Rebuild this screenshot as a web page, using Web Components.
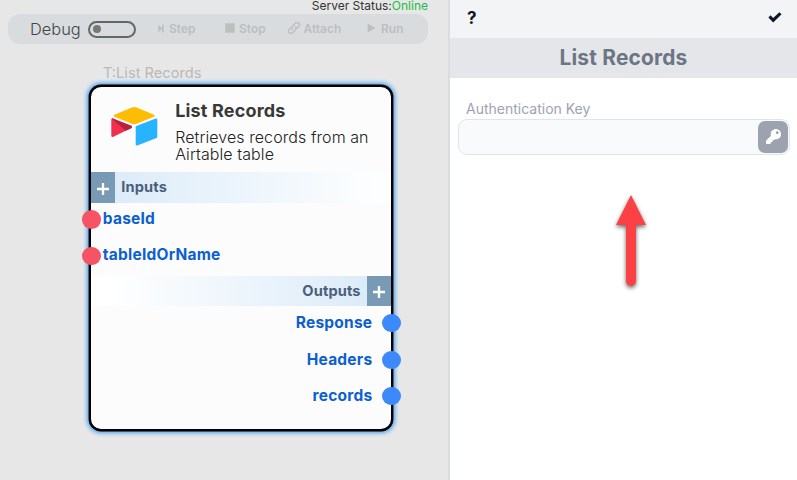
<!DOCTYPE html>
<html lang="en">
<head>
<meta charset="utf-8">
<title>List Records</title>
<style>
html,body{margin:0;height:100%;overflow:hidden}
body{font-family:Inter,"Liberation Sans",sans-serif;background:#fff}
</style>
</head>
<body>
<flow-app></flow-app>
<script>
const define = (name, html, extra) => customElements.define(name, class extends HTMLElement {
  constructor() {
    super();
    const t = document.createElement('template');
    t.innerHTML = html;
    this.attachShadow({mode: 'open'}).append(t.content.cloneNode(true));
    if (extra) extra(this, this.shadowRoot);
  }
});

define('ui-icon', `<style>:host{display:inline-flex}svg{display:block;width:100%;height:100%;fill:currentColor;overflow:visible}</style><svg></svg>`, (el, root) => {
  const icons = {
    step: ['0 0 6 10', '<path d="M0 .5 4.2 5 0 9.5zM4.2.5H6v9H4.2z"/>'],
    stop: ['0 0 10 10', '<path d="M.3.3h9.4v9.4H.3z"/>'],
    run: ['0 0 9 10', '<path d="M.6.4 8.6 5 .6 9.6z"/>'],
    link: ['0 0 24 24', '<path fill="none" stroke="currentColor" stroke-width="2.8" stroke-linecap="round" d="M9.2 14.8a5 5 0 0 1 0-7L14.7 2.6a4.8 4.8 0 0 1 6.8 6.8l-2.8 2.8M14.8 9.2a5 5 0 0 1 0 7L9.3 21.4a4.8 4.8 0 0 1-6.8-6.8l2.8-2.8"/>'],
    check: ['0 0 14 11', '<path d="M.4 5.4 2.5 3.3 5.2 6 11.4.2l2.2 2.1L5.2 10.5z"/>'],
    key: ['0 0 512 512', '<path fill-rule="evenodd" d="M512 176.001C512 273.203 433.202 352 336 352c-11.220 0-22.190-1.062-32.827-3.069l-24.012 27.014A23.999 23.999 0 0 1 261.223 384H224v40c0 13.255-10.745 24-24 24h-40v40c0 13.255-10.745 24-24 24H24c-13.255 0-24-10.745-24-24v-78.059c0-6.365 2.529-12.470 7.029-16.971l161.802-161.802C163.108 213.814 160 195.271 160 176 160 78.798 238.797.001 335.999 0 433.488-.001 512 78.511 512 176.001zM336 128c0 26.510 21.490 48 48 48s48-21.490 48-48-21.490-48-48-48-48 21.490-48 48z"/>'],
    airtable: ['0 0 46 39', '<path fill="#febd00" d="M20.800.500 3.500 7.700c-1 .4-1 1.700 0 2.100l17.400 6.900c1.500.6 3.200.6 4.700 0L43 9.800c1-.4 1-1.700 0-2.100L25.600.5a6.300 6.300 0 0 0-4.800 0z"/><path fill="#27b3ff" d="M24.700 20.200v17.200c0 .8.800 1.400 1.600 1.100l19.300-7.500c.4-.2.700-.6.700-1.100V12.700c0-.8-.8-1.400-1.600-1.100l-19.300 7.500c-.4.200-.7.600-.7 1.100z"/><path fill="#f22f4c" d="m20.500 21-5.700 2.800-12.500 6C1.500 30.200.3 29.600.3 28.700V12.600c0-.3.200-.6.400-.8.900-.5 1.700-.1 2.300.1l17.200 6.900c1 .4 1 1.700.3 2.200z"/><path fill="#b32440" d="m20.500 21-5.700 2.800L.7 11.800c.5-.4 1.400-.3 2.300.1l17.200 6.900c1 .4 1 1.700.3 2.200z"/>'],
    arrow: ['0 0 30 93', '<path d="M15 0 30 30H20v56a5 5 0 0 1-10 0V30H0z"/>']
  };
  const [box, body] = icons[el.getAttribute('name')];
  const svg = root.querySelector('svg');
  svg.setAttribute('viewBox', box);
  svg.innerHTML = body;
});

define('tool-bar', `<style>
:host{display:flex;box-sizing:border-box;width:420px;height:30px;margin:0 0 0 8px;padding-left:22px;align-items:center;border-radius:12px;background:#d9dcdf;color:#bebebe;font-size:12px;font-weight:600;line-height:30px}
.debug{font-size:16.400px;font-weight:300;color:#444;width:57.500px}
.toggle{box-sizing:border-box;width:48px;height:17px;border:2px solid #666;border-radius:9px;padding:2.500px 3px}
.toggle i{display:block;width:8px;height:8px;border-radius:50%;background:#777}
.item{display:flex;align-items:center}
.item ui-icon{margin-top:-2px}
</style><span class="debug">Debug</span><span class="toggle"><i></i></span>
<span class="item" style="margin-left:22px;width:67px"><ui-icon name="step" style="width:6px;height:9px;margin-right:5.500px"></ui-icon>Step</span>
<span class="item" style="width:63px"><ui-icon name="stop" style="width:10px;height:10px;margin-right:4.500px"></ui-icon>Stop</span>
<span class="item" style="width:79.500px"><ui-icon name="link" style="width:12px;height:12px;margin-right:4px"></ui-icon>Attach</span>
<span class="item"><ui-icon name="run" style="width:9px;height:10px;margin-right:5px"></ui-icon>Run</span>`);

define('section-bar', `<style>
:host{display:flex;height:30.600px;background:linear-gradient(90deg,#d9eaf8,#fff);color:#4b5f7d;font-size:14.600px;letter-spacing:.15px;font-weight:700;line-height:30px}
:host([end]){flex-direction:row-reverse;background:linear-gradient(270deg,#d9eaf8,#fff 95%)}
.add{width:24.500px;display:grid;place-items:center;background:#789ab4}
svg{width:12px;height:12px;margin-top:3px}
.name{padding:0 6px}
</style><span class="add"><svg viewBox="0 0 12 12"><path d="M6 0v12M0 6h12" stroke="#fff" stroke-width="2.300"/></svg></span><span class="name"><slot></slot></span>`);

define('port-row', `<style>
:host{display:flex;align-items:flex-start;height:36.500px;color:#0b60d0;font-size:15.500px;letter-spacing:.23px;font-weight:700;line-height:31px}
i{flex:none;width:18.400px;height:18.400px;border-radius:50%;background:#f65365;margin:7.700px 2px 0 -8.300px}
:host([end]){flex-direction:row-reverse}
:host([end]) i{background:#3c89fb;margin:7.900px -9.700px 0 10.200px}
:host([end]) span{padding-top:1px}
</style><i></i><span><slot></slot></span>`);

define('node-card', `<style>
:host{display:block;box-sizing:border-box;width:304.500px;height:345.500px;margin-left:88.700px;border:2px solid #000;border-radius:12px;background:#fcfcfc;box-shadow:0 0 0 .4px #000,0 0 4px 2px #459ff0}
.head{display:flex;height:85px;box-sizing:border-box;padding:20px 0 0 20.500px}
.head ui-icon{width:46px;height:39px;margin-right:18px}
h2{margin:-7px 0 0;font-size:18px;letter-spacing:.17px;line-height:22px;font-weight:700;color:#383838}
p{margin:7px 0 0;font-size:16px;letter-spacing:.08px;line-height:17px;color:#222;font-weight:300;white-space:nowrap}
</style><div class="head"><ui-icon name="airtable"></ui-icon><div><h2>List Records</h2><p>Retrieves records from an<br>Airtable table</p></div></div>
<section-bar>Inputs</section-bar><port-row>baseId</port-row><port-row>tableIdOrName</port-row>
<section-bar end>Outputs</section-bar><port-row end>Response</port-row><port-row end>Headers</port-row><port-row end>records</port-row>`);

define('flow-canvas', `<style>
:host{display:block;width:448px;background:#e7e7e7}
.status{height:14px;line-height:12px;font-size:12px;text-align:right;padding-right:20px;color:#333}
.status b{font-weight:400;color:#20bd45}
.type{height:41px;box-sizing:border-box;padding:20px 0 0 103px;font-size:14.650px;line-height:18px;color:#b9b9b9}
</style><div class="status">Server Status:<b>Online</b></div><tool-bar></tool-bar><div class="type">T:List Records</div><node-card></node-card>`);

define('auth-field', `<style>
:host{display:block;padding:22px 7px 0 8px}
label{display:block;height:19px;line-height:18px;padding-left:8px;font-size:14px;color:#9ca3af}
.box{display:flex;justify-content:flex-end;box-sizing:border-box;height:36px;padding:1px;border:1px solid #e2e4e8;border-radius:9px;background:#f9fafc}
.key{display:grid;place-items:center;width:30px;height:32px;border-radius:7px;background:#9ca3af;color:#fff}
ui-icon{width:15px;height:15px;margin-top:-2px}
</style><label>Authentication Key</label><div class="box"><span class="key"><ui-icon name="key"></ui-icon></span></div>`);

define('side-panel', `<style>
:host{display:block;position:relative;box-sizing:border-box;width:349px;border-left:2px solid #d9dce1;background:#fff}
.top{display:flex;justify-content:space-between;align-items:center;height:38px;padding:0 15px 0 17px;box-sizing:border-box;background:#f3f4f6;color:#0f172a;font-size:17px;font-weight:700;line-height:36px}
.top span{margin-top:-2px}
.top ui-icon{width:14px;height:11px;margin-top:-4px}
h1{margin:0;height:40px;line-height:39px;font-size:20.900px;letter-spacing:.2px;font-weight:700;text-align:center;background:#e5e6ea;color:#6b7583}
.pointer{position:absolute;left:166px;top:195px;width:30px;height:93px;color:#fc4145;filter:drop-shadow(0 2px 2px #0009)}
</style><div class="top"><span>?</span><ui-icon name="check"></ui-icon></div><h1>List Records</h1><auth-field></auth-field><ui-icon class="pointer" name="arrow"></ui-icon>`);

define('flow-app', `<style>:host{display:flex;width:797px;height:480px;overflow:hidden}flow-canvas,side-panel{flex:none}</style><flow-canvas></flow-canvas><side-panel></side-panel>`);
</script>
</body>
</html>
